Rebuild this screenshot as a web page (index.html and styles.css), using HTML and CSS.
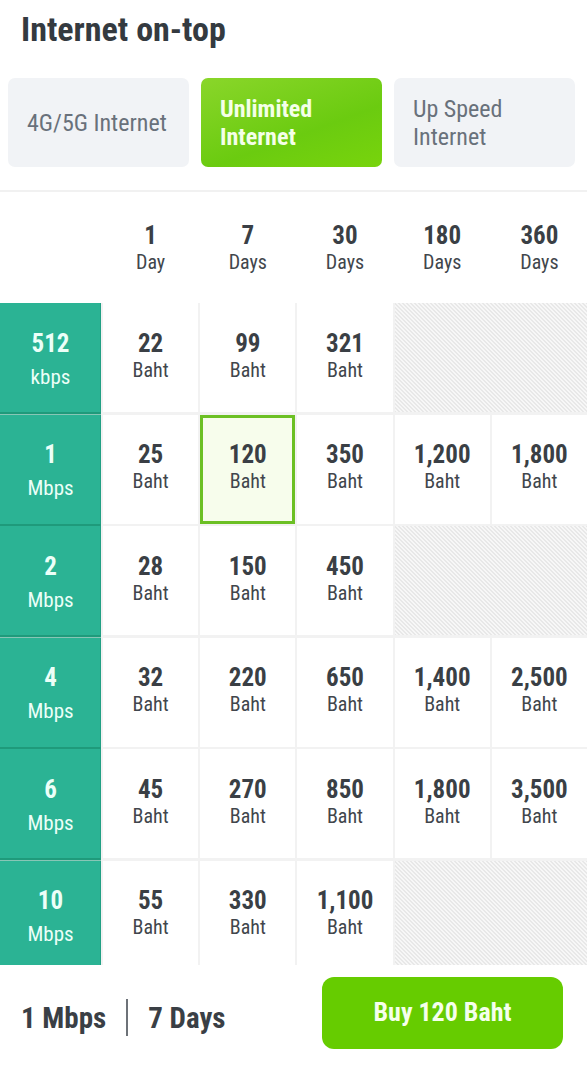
FILE: index.html
```html
<!DOCTYPE html>
<html lang="en">
<head>
<meta charset="utf-8">
<title>Internet on-top</title>
<link rel="stylesheet" href="styles.css">
</head>
<body>
<div class="page">
  <h1 class="title">Internet on-top</h1>
  <div class="tabs">
    <div class="tab">4G/5G Internet</div>
    <div class="tab tab-active">Unlimited<br>Internet</div>
    <div class="tab">Up Speed<br>Internet</div>
  </div>
  <div class="table-wrap">
    <div class="header-row">
      <div></div>
      <div class="head"><b>1</b><span>Day</span></div>
      <div class="head"><b>7</b><span>Days</span></div>
      <div class="head"><b>30</b><span>Days</span></div>
      <div class="head"><b>180</b><span>Days</span></div>
      <div class="head"><b>360</b><span>Days</span></div>
    </div>
    <div class="grid">
      <div class="speed"><b>512</b><span>kbps</span></div>
      <div class="cell"><b>22</b><span>Baht</span></div>
      <div class="cell"><b>99</b><span>Baht</span></div>
      <div class="cell"><b>321</b><span>Baht</span></div>
      <div class="hatch"></div>

      <div class="speed"><b>1</b><span>Mbps</span></div>
      <div class="cell"><b>25</b><span>Baht</span></div>
      <div class="cell selected"><b>120</b><span>Baht</span></div>
      <div class="cell"><b>350</b><span>Baht</span></div>
      <div class="cell"><b>1,200</b><span>Baht</span></div>
      <div class="cell"><b>1,800</b><span>Baht</span></div>

      <div class="speed"><b>2</b><span>Mbps</span></div>
      <div class="cell"><b>28</b><span>Baht</span></div>
      <div class="cell"><b>150</b><span>Baht</span></div>
      <div class="cell"><b>450</b><span>Baht</span></div>
      <div class="hatch"></div>

      <div class="speed"><b>4</b><span>Mbps</span></div>
      <div class="cell"><b>32</b><span>Baht</span></div>
      <div class="cell"><b>220</b><span>Baht</span></div>
      <div class="cell"><b>650</b><span>Baht</span></div>
      <div class="cell"><b>1,400</b><span>Baht</span></div>
      <div class="cell"><b>2,500</b><span>Baht</span></div>

      <div class="speed"><b>6</b><span>Mbps</span></div>
      <div class="cell"><b>45</b><span>Baht</span></div>
      <div class="cell"><b>270</b><span>Baht</span></div>
      <div class="cell"><b>850</b><span>Baht</span></div>
      <div class="cell"><b>1,800</b><span>Baht</span></div>
      <div class="cell"><b>3,500</b><span>Baht</span></div>

      <div class="speed"><b>10</b><span>Mbps</span></div>
      <div class="cell"><b>55</b><span>Baht</span></div>
      <div class="cell"><b>330</b><span>Baht</span></div>
      <div class="cell"><b>1,100</b><span>Baht</span></div>
      <div class="hatch"></div>
    </div>
  </div>
  <div class="bottom-bar">
    <div class="summary">
      <span>1 Mbps</span>
      <i class="divider"></i>
      <span>7 Days</span>
    </div>
    <button class="buy">Buy 120 Baht</button>
  </div>
</div>
</body>
</html>
```

FILE: styles.css
```css
* { box-sizing: border-box; }
html, body { margin: 0; padding: 0; background: #fff; }
body {
  font-family: "Liberation Sans Narrow", "Roboto Condensed", "Liberation Sans", sans-serif;
  color: #3a3f45;
}
.page {
  width: 587px;
  height: 1080px;
  display: flex;
  flex-direction: column;
  overflow: hidden;
}
.title {
  margin: 0;
  padding: 10px 0 0 21px;
  height: 78px;
  font-size: 34px;
  font-weight: 700;
  line-height: 38px;
  color: #343a40;
}
.tabs {
  display: flex;
  gap: 12px;
  padding: 0 12px 0 8px;
  height: 89px;
}
.tab {
  flex: 1;
  display: flex;
  align-items: center;
  padding: 0 19px;
  border-radius: 7px;
  background: #f1f3f6;
  color: #69717b;
  font-size: 24px;
  line-height: 28px;
  white-space: nowrap;
}
.tab-active {
  background: linear-gradient(160deg, #8ad62a 0%, #6bcb10 60%, #78d40c 100%);
  color: #f4ffe8;
  font-weight: 700;
}
.table-wrap {
  margin-top: 23px;
  flex: 1;
  overflow: hidden;
  border-top: 2px solid #f1f1f1;
}
.header-row {
  display: grid;
  grid-template-columns: 101px repeat(5, 1fr);
  column-gap: 2px;
  height: 111px;
  background: #fff;
}
.head {
  display: flex;
  flex-direction: column;
  align-items: center;
  justify-content: center;
}
.grid {
  display: grid;
  grid-template-columns: 101px repeat(5, 1fr);
  grid-auto-rows: 109px;
  column-gap: 2px;
  row-gap: 2.5px;
  background: #f2f2f2;
}
.head b, .cell b, .speed b {
  font-size: 25px;
  line-height: 29px;
  font-weight: 700;
}
.head span, .cell span {
  font-size: 20px;
  line-height: 24px;
  color: #41464c;
}
.cell {
  background: #fff;
  display: flex;
  flex-direction: column;
  align-items: center;
  justify-content: center;
  padding-bottom: 5px;
}
.cell b { color: #3a3f45; }
.selected {
  background: #f7fdec;
  border: 3px solid #6cc024;
}
.speed {
  background: #2bb394;
  color: #ecfff8;
  display: flex;
  flex-direction: column;
  align-items: center;
  justify-content: center;
  padding-top: 4px;
  box-shadow: 0 2.5px 0 #1f9a7b, inset -1px 0 0 #22a084;
}
.speed span {
  font-size: 21px;
  line-height: 28px;
  margin-top: 5px;
}
.hatch {
  grid-column: span 2;
  background-color: #e8e8e8;
  background-image: linear-gradient(45deg, #f7f7f7 25%, transparent 25%, transparent 50%, #f7f7f7 50%, #f7f7f7 75%, transparent 75%);
  background-size: 4px 4px;
}
.bottom-bar {
  height: 115px;
  flex: none;
  background: #fff;
  display: flex;
  align-items: flex-start;
  padding: 12px 24px 0 21px;
}
.summary {
  display: flex;
  align-items: center;
  gap: 20px;
  margin-top: 22px;
  font-size: 29px;
  font-weight: 700;
  color: #3a3f45;
  line-height: 36px;
}
.divider {
  width: 2px;
  height: 37px;
  background: #6d7278;
}
.buy {
  margin-left: auto;
  width: 241px;
  height: 72px;
  border: 0;
  border-radius: 12px;
  background: #66cc00;
  color: #f5ffec;
  font-family: inherit;
  font-size: 26px;
  font-weight: 700;
  padding: 0 0 3px;
}
```
